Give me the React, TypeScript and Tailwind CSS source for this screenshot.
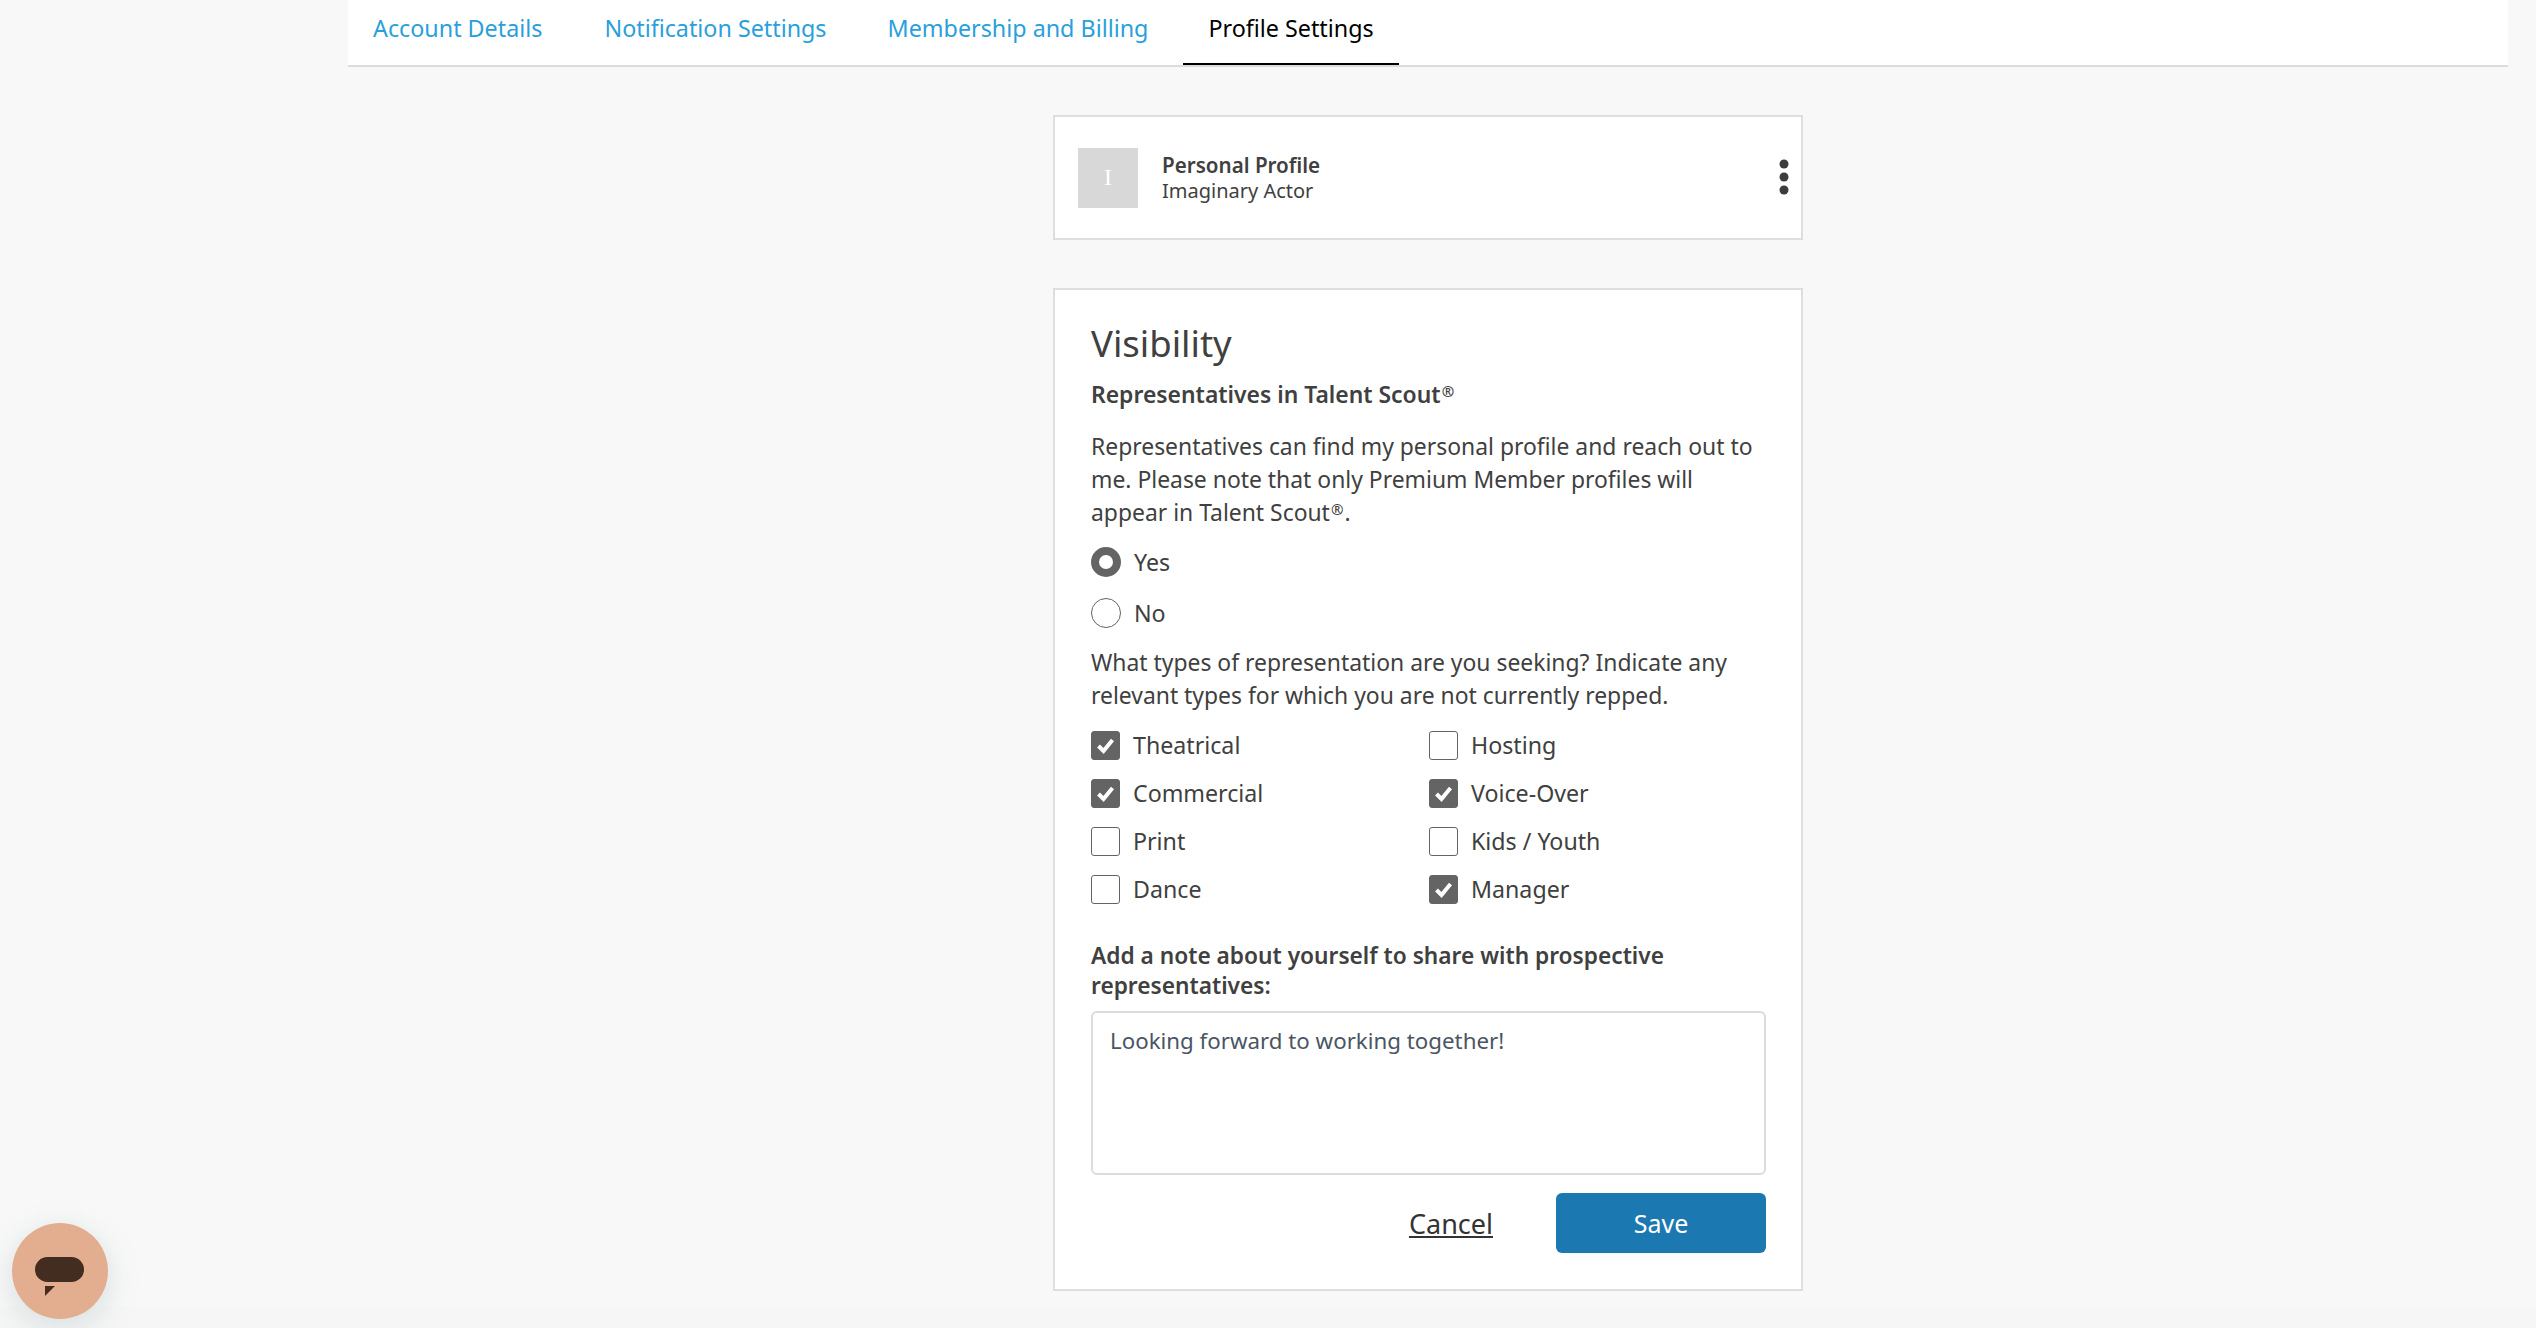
import React from "react";

const Check = ({ on, label }: { on: boolean; label: string }) => (
  <label className="flex items-center h-[29px]">
    <span className={`flex items-center justify-center w-[29px] h-[29px] rounded-[3px] border ${on ? "bg-[#646464] border-[#646464]" : "bg-white border-[#646464]"}`}>
      {on && (
        <svg width="19" height="17" viewBox="0 0 19 17" fill="none">
          <path d="M2.5 9 L7.5 14 L16.5 3" stroke="#fff" strokeWidth="4" />
        </svg>
      )}
    </span>
    <span className="ml-[13px] text-[23.2px]">{label}</span>
  </label>
);

const Radio = ({ on, label }: { on: boolean; label: string }) => (
  <label className="flex items-center h-[30px]">
    <span className={`w-[30px] h-[30px] rounded-full bg-white ${on ? "border-[8px] border-[#646464]" : "border border-[#646464]"}`} />
    <span className="ml-[13px] text-[23.2px]">{label}</span>
  </label>
);

const Reg = () => <span className="mx-[1px] text-[15px] leading-[0] align-[6px]">®</span>;

export default function App() {
  return (
    <div className="relative h-[1328px] overflow-hidden bg-[#f8f8f8] text-[#404040] text-[22.9px] leading-[33px] font-['Noto_Sans',sans-serif]">
      <div className="ml-[348px] w-[2160px] flex flex-col items-center">
        <nav className="w-full h-[67px] bg-white border-b-2 border-[#dcdcdc] flex text-[23.3px] text-[#2a9fdc]">
          <a className="px-[25px] pt-[12px] mr-[12px]">Account Details</a>
          <a className="px-[25px] pt-[12px] mr-[11px]">Notification Settings</a>
          <a className="px-[25px] pt-[12px] mr-[10px]">Membership and Billing</a>
          <a className="px-[25px] pt-[12px] h-[65px] border-b-2 border-black text-black">Profile Settings</a>
        </nav>

        <section className="mt-[48px] w-[750px] h-[125px] bg-white border-2 border-[#dedede] flex items-center pl-[23px] pr-[12px]">
          <div className="w-[60px] h-[60px] bg-[#d8d8d8] flex items-center justify-center text-white text-[24px] font-['Liberation_Serif',serif]">I</div>
          <div className="ml-[24px] flex-1 text-[20px] leading-[26px]">
            <div className="font-semibold text-[20.6px]">Personal Profile</div>
            <div>Imaginary Actor</div>
          </div>
          <svg width="10" height="36" viewBox="0 0 10 36" fill="#3c3c3c" className="mt-[-2px]">
            <circle cx="5" cy="5" r="4.5" />
            <circle cx="5" cy="18" r="4.5" />
            <circle cx="5" cy="31" r="4.5" />
          </svg>
        </section>

        <section className="mt-[48px] w-[750px] h-[1003px] bg-white border-2 border-[#dedede] pl-[36px] pr-[35px] pt-[28px]">
          <h2 className="text-[36.5px] leading-[50px]">Visibility</h2>
          <h3 className="mt-[10px] font-semibold text-[22.9px]">Representatives in Talent Scout<Reg /></h3>
          <p className="mt-[19px]">
            Representatives can find my personal profile and reach out to me. Please note that only Premium Member profiles will
            <br />
            appear in Talent Scout<Reg />.
          </p>
          <div className="mt-[18px] flex flex-col gap-[21px]">
            <Radio on label="Yes" />
            <Radio on={false} label="No" />
          </div>
          <p className="mt-[18px]">
            What types of representation are you seeking? Indicate any relevant types for which you are not currently repped.
          </p>
          <div className="mt-[19px] grid grid-cols-[338px_1fr] gap-y-[19px]">
            <Check on label="Theatrical" />
            <Check on={false} label="Hosting" />
            <Check on label="Commercial" />
            <Check on label="Voice-Over" />
            <Check on={false} label="Print" />
            <Check on={false} label="Kids / Youth" />
            <Check on={false} label="Dance" />
            <Check on label="Manager" />
          </div>
          <h3 className="mt-[37px] font-semibold text-[22.7px] leading-[30px]">
            Add a note about yourself to share with prospective representatives:
          </h3>
          <div className="mt-[10px] h-[164px] rounded-[6px] border-2 border-[#dcdcdc] pl-[17px] pt-[11px] text-[22.3px] text-[#4b5563]">
            Looking forward to working together!
          </div>
          <div className="mt-[18px] flex items-center justify-end">
            <a className="underline text-[27px] text-[#333]">Cancel</a>
            <button className="ml-[63px] w-[210px] h-[60px] rounded-[6px] bg-[#1b78b0] text-white text-[25px]">Save</button>
          </div>
        </section>
      </div>
      <div className="absolute left-0 right-0 top-[1307px] bottom-0 bg-[#f6f6f6]" />
      <button className="absolute left-[12px] top-[1223px] w-[96px] h-[96px] rounded-full bg-[#e3ae8f] shadow-[0_8px_30px_rgba(120,150,150,0.25)]">
        <svg width="96" height="96" viewBox="0 0 96 96">
          <rect x="23" y="34" width="49" height="25" rx="12.5" fill="#432c20" />
          <path d="M33 63 H43 L33 73 Z" fill="#432c20" />
        </svg>
      </button>
    </div>
  );
}
